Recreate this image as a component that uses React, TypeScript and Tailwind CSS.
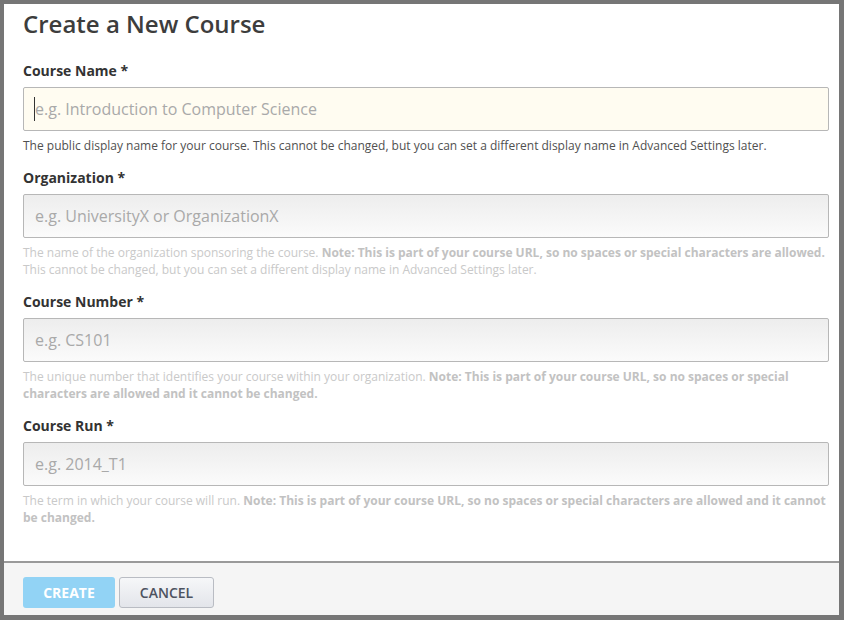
const font = { fontFamily: '"Open Sans", "Liberation Sans", sans-serif' };

type FieldProps = {
  label: string;
  placeholder: string;
  focused?: boolean;
  help: React.ReactNode;
  muted?: boolean;
};

function Field({ label, placeholder, focused, help, muted }: FieldProps) {
  return (
    <div className="flex flex-col">
      <label className="text-[14px] leading-[20px] font-bold text-[#333333] mb-[6px]">{label}</label>
      <div className="relative">
        <input
          placeholder={placeholder}
          className={`w-full h-[44px] border border-[#b7b7b7] rounded-[2px] pl-[11px] text-[16px] outline-none placeholder:text-[#a9a9a9] ${
            focused ? "bg-[#fffcf1]" : "bg-gradient-to-b from-[#ededed] to-[#fbfbfb]"
          }`}
          style={font}
        />
        {focused && <span className="absolute left-[11px] top-[10px] w-px h-[24px] bg-[#333333]" />}
      </div>
      <p className={`mt-[6px] text-[12px] leading-[17px] ${muted ? "text-[#c9c9c9]" : "text-[#505050]"}`}>{help}</p>
    </div>
  );
}

export default function App() {
  return (
    <div className="w-[844px] h-[620px] bg-[#767676] pt-[4px] pl-[4px] pr-[5px] pb-[5px]" style={font}>
      <div className="h-full flex flex-col bg-white">
        <div className="flex-1 pl-[19px] pr-[10px] pt-[4px]">
          <h1 className="text-[24px] leading-[32px] font-semibold text-[#3d3d3d] mb-[21px]">Create a New Course</h1>
          <div className="flex flex-col gap-[14px]">
            <Field
              label="Course Name *"
              placeholder="e.g. Introduction to Computer Science"
              focused
              help="The public display name for your course. This cannot be changed, but you can set a different display name in Advanced Settings later."
            />
            <Field
              label="Organization *"
              placeholder="e.g. UniversityX or OrganizationX"
              muted
              help={
                <>
                  The name of the organization sponsoring the course.{" "}
                  <strong className="font-bold text-[#c2c2c2]">
                    Note: This is part of your course URL, so no spaces or special characters are allowed.
                  </strong>{" "}
                  This cannot be changed, but you can set a different display name in Advanced Settings later.
                </>
              }
            />
            <Field
              label="Course Number *"
              placeholder="e.g. CS101"
              muted
              help={
                <>
                  The unique number that identifies your course within your organization.{" "}
                  <strong className="font-bold text-[#c2c2c2]">
                    Note: This is part of your course URL, so no spaces or special characters are allowed and it cannot be
                    changed.
                  </strong>
                </>
              }
            />
            <Field
              label="Course Run *"
              placeholder="e.g. 2014_T1"
              muted
              help={
                <>
                  The term in which your course will run.{" "}
                  <strong className="font-bold text-[#c2c2c2]">
                    Note: This is part of your course URL, so no spaces or special characters are allowed and it cannot be
                    changed.
                  </strong>
                </>
              }
            />
          </div>
        </div>
        <div className="border-t-2 border-[#9a9a9a] bg-[#f5f5f5] px-[19px] pt-[14px] pb-[7px] flex gap-[4px]">
          <button className="w-[92px] h-[31px] rounded-[3px] bg-[#92d3f5] text-white text-[14px] font-bold">CREATE</button>
          <button className="w-[95px] h-[31px] rounded-[3px] border border-[#b9bcc3] bg-gradient-to-b from-[#f6f7f9] to-[#e3e5ea] text-[#4d5360] text-[14px] font-semibold">
            CANCEL
          </button>
        </div>
      </div>
    </div>
  );
}
